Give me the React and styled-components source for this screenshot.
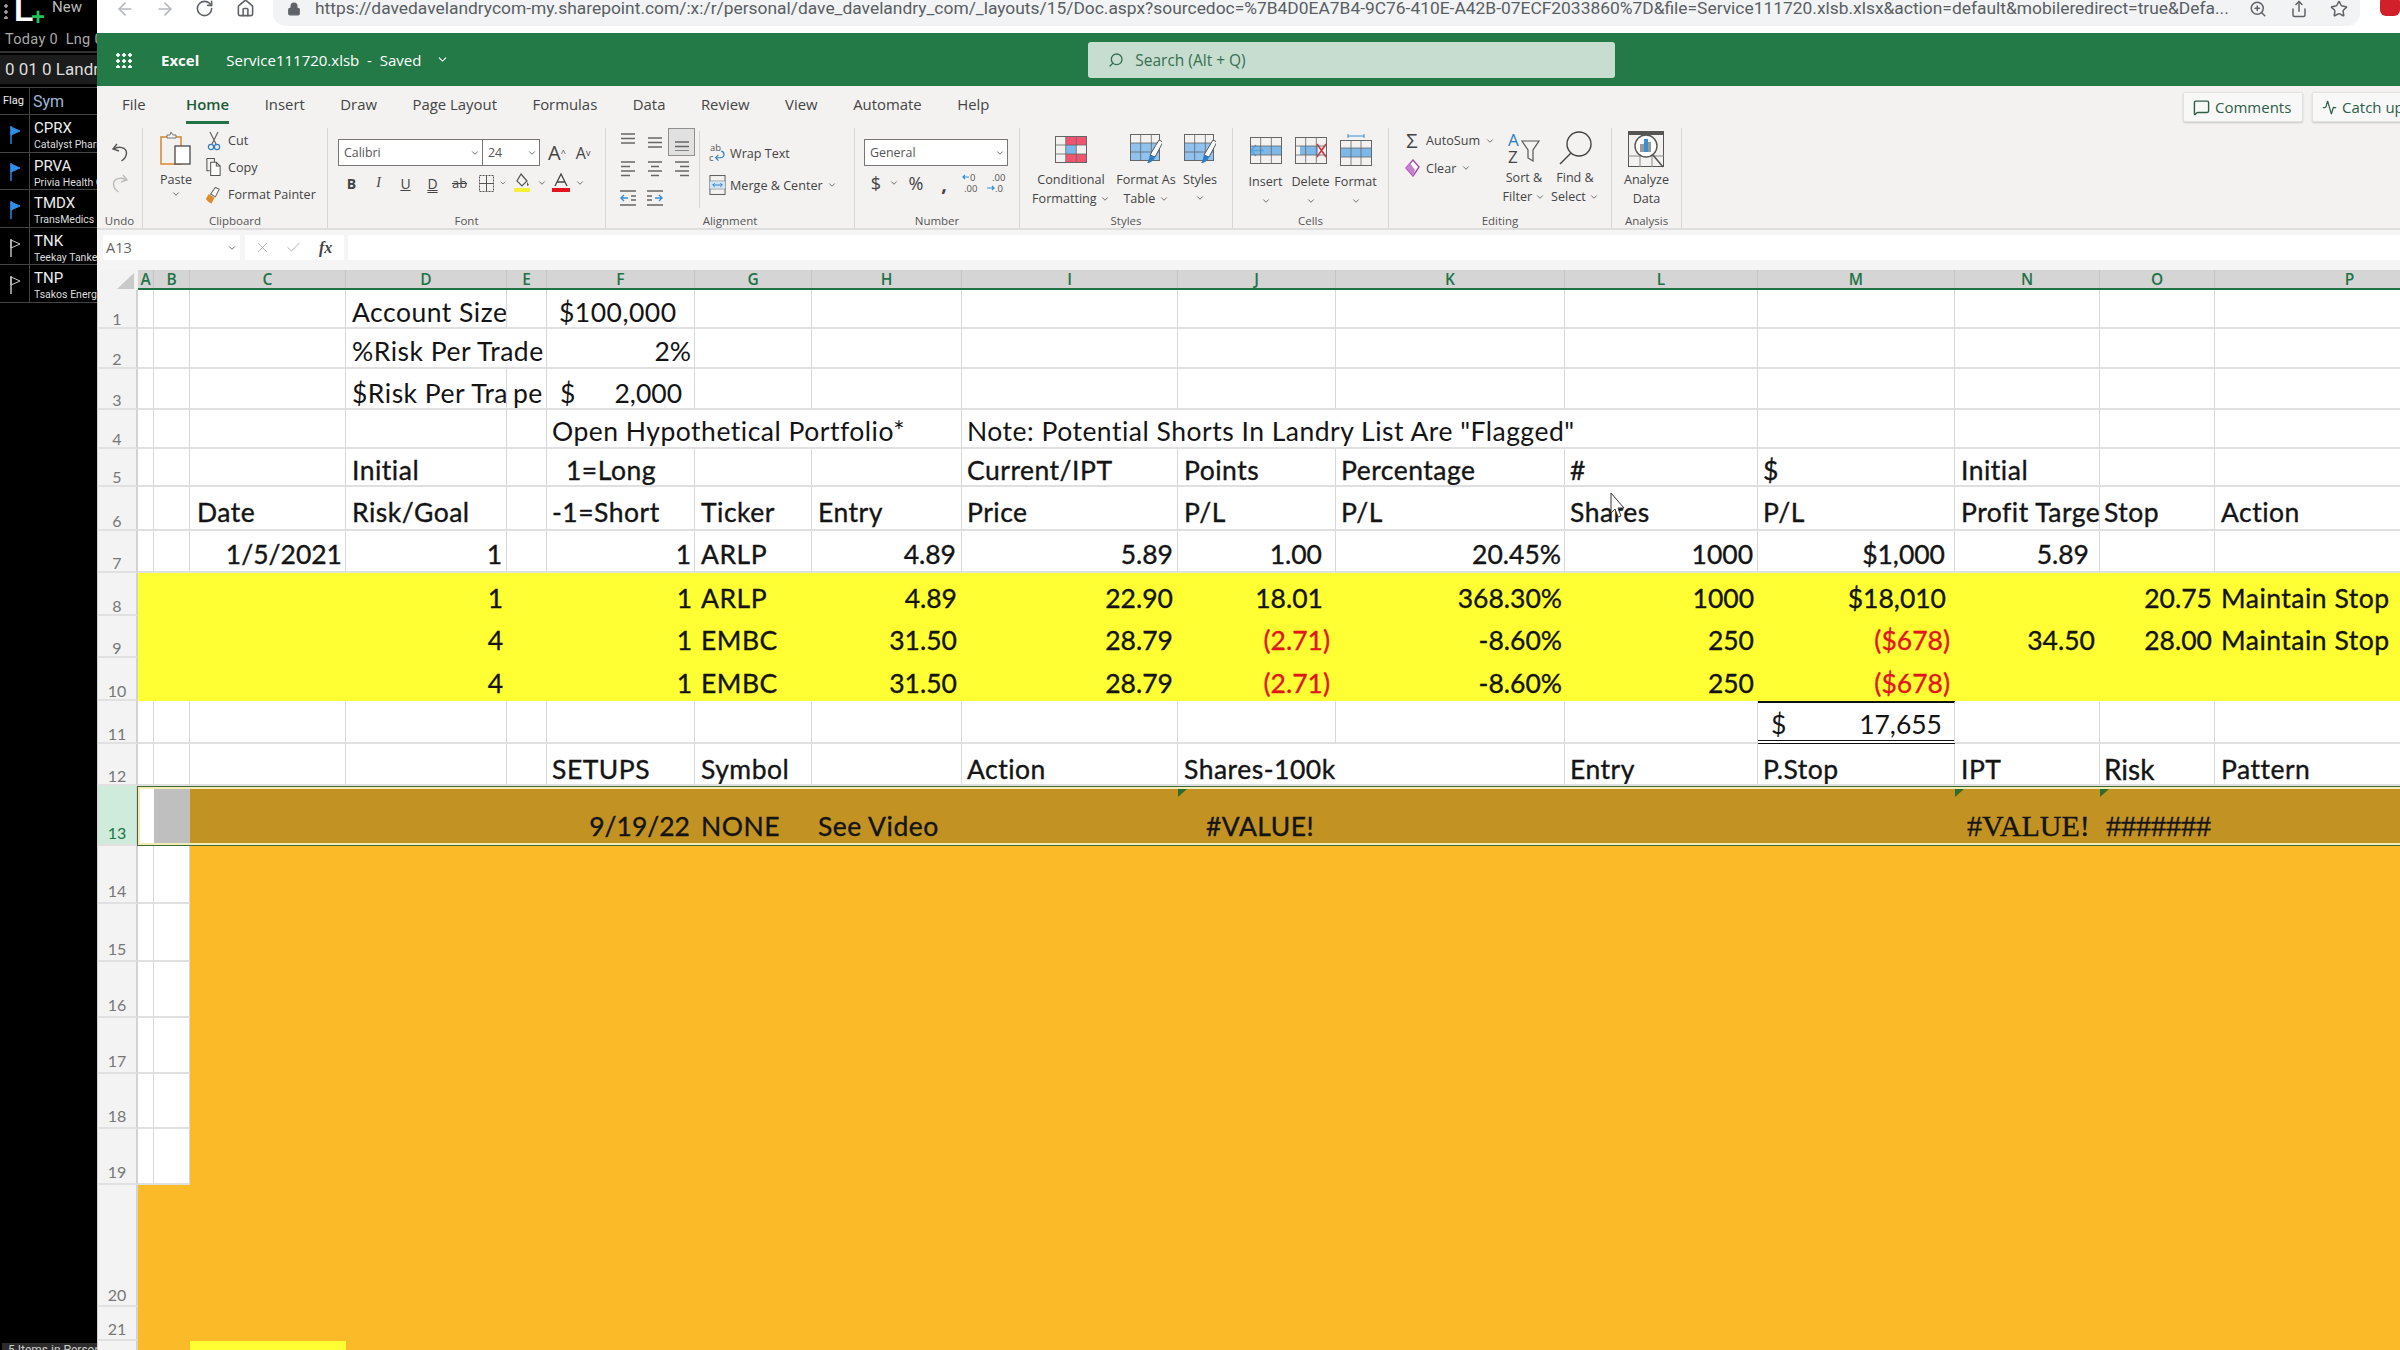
import React from "react";
import styled, { createGlobalStyle } from "styled-components";
import {
  ArrowLeft,
  ArrowRight,
  RotateCw,
  Home,
  Lock,
  ZoomIn,
  Share,
  Star,
  ChevronDown,
  Search,
  MessageSquare,
  Activity,
  X,
  Check,
} from "lucide-react";

const UI_FONT = `"Open Sans", "Noto Sans", sans-serif`;
const CELL_FONT = `Lato, "Open Sans", sans-serif`;

const GlobalStyle = createGlobalStyle`
  html, body {
    margin: 0;
    padding: 0;
    width: 2400px;
    height: 1350px;
    overflow: hidden;
    background: #000;
  }
  * { box-sizing: border-box; }
`;

const Page = styled.div`
  display: flex;
  width: 2400px;
  height: 1350px;
  overflow: hidden;
`;

/* left watch list */
const Side = styled.aside`
  width: 97px;
  flex-shrink: 0;
  height: 100%;
  background: #000;
  color: #eee;
  font-family: Roboto, sans-serif;
  display: flex;
  flex-direction: column;
  overflow: hidden;
  white-space: nowrap;
`;
const Brand = styled.div`
  height: 29px;
  display: flex;
  align-items: flex-start;
  padding-left: 4px;
  gap: 6px;
  overflow: hidden;
`;
const Grip = styled.div`
  width: 4px;
  height: 16px;
  margin-top: 3px;
  background: radial-gradient(circle, #999 1.5px, transparent 2px) 0 0 / 4px 6px;
`;
const BrandL = styled.span`
  font: 700 32px/20px "Liberation Sans", sans-serif;
  color: #fff;
  width: 14px;
`;
const BrandPlus = styled.span`
  font: 700 24px/26px "Liberation Sans", sans-serif;
  color: #21c35c;
  width: 12px;
  margin-top: 4px;
  margin-left: -3px;
`;
const BrandNew = styled.span`
  font-size: 15px;
  line-height: 14px;
  color: #bbb;
  margin-left: 3px;
`;
const Stats = styled.div`
  height: 24px;
  font-size: 14.5px;
  letter-spacing: 0.3px;
  line-height: 22px;
  color: #aaa;
  padding-left: 5px;
  border-bottom: 2px solid #333;
`;
const Portfolio = styled.div`
  height: 32px;
  margin-top: 2px;
  font-size: 17px;
  line-height: 28px;
  padding-left: 5px;
  background: #1c1c1c;
  color: #ddd;
  border-bottom: 3px solid #000;
`;
const WatchHead = styled.div`
  height: 28px;
  display: flex;
  align-items: center;
  border-top: 1px solid #444;
  border-bottom: 1px solid #444;
`;
const FlagHead = styled.span`
  width: 30px;
  height: 100%;
  line-height: 26px;
  font-size: 11px;
  padding-left: 3px;
  border-right: 1px solid #444;
`;
const SymHead = styled.span`
  padding-left: 3px;
  font-size: 16px;
  color: #9db8d8;
`;
const WatchRow = styled.div`
  height: 37.6px;
  display: flex;
  border-bottom: 1px solid #444;
`;
const FlagCell = styled.div`
  width: 30px;
  flex-shrink: 0;
  display: flex;
  align-items: center;
  justify-content: center;
  padding-top: 3px;
  border-right: 1px solid #444;
`;
const SymCell = styled.div`
  padding: 3px 0 0 4px;
  overflow: hidden;
`;
const Sym = styled.div`
  font-size: 15px;
  line-height: 20px;
  color: #eee;
`;
const SymName = styled.div`
  font-size: 10.5px;
  line-height: 13px;
  color: #ddd;
`;
const SideFoot = styled.div`
  margin-top: auto;
  height: 7px;
  margin-left: 2px;
  padding-left: 6px;
  background: #2b2b2b;
  color: #ccc;
  font-size: 12px;
  line-height: 14px;
  overflow: hidden;
`;

/* main column */
const Main = styled.main`
  flex: 1;
  min-width: 0;
  display: flex;
  flex-direction: column;
  background: #fff;
  overflow: hidden;
  position: relative;
`;

/* browser toolbar */
const Browser = styled.div`
  height: 33px;
  flex-shrink: 0;
  background: #fff;
  display: flex;
  align-items: flex-start;
  padding-left: 18px;
  color: #5f6368;
  overflow: hidden;
`;
const NavButton = styled.span`
  width: ${(p) => p.$w}px;
  height: 17px;
  flex-shrink: 0;
  margin-left: ${(p) => p.$ml || 0}px;
  display: flex;
  align-items: center;
  justify-content: center;
  color: ${(p) => p.$color || "#5f6368"};
`;
const UrlPill = styled.div`
  width: 2087px;
  margin-left: 18px;
  height: 26px;
  flex-shrink: 0;
  background: #f1f3f4;
  border-radius: 0 0 13px 13px;
  display: flex;
  align-items: flex-start;
  padding-left: 14px;
`;
const UrlText = styled.span`
  font: 400 17.4px/17px Roboto, sans-serif;
  color: #5a5e63;
  margin-left: 14px;
  width: 1918px;
  white-space: nowrap;
  overflow: hidden;
`;
const Extension = styled.span`
  width: 20px;
  height: 20px;
  margin-left: 20px;
  margin-top: -4px;
  flex-shrink: 0;
  background: #d2202a;
  border-radius: 6px;
`;

/* green title bar */
const TitleBar = styled.header`
  height: 53px;
  flex-shrink: 0;
  background: #237a47;
  color: #fff;
  display: flex;
  align-items: center;
  font-family: ${UI_FONT};
  position: relative;
`;
const Waffle = styled.span`
  width: 18px;
  height: 16px;
  margin-left: 18px;
  background: radial-gradient(circle, #fff 1.5px, transparent 2px) 0 0 / 6px 6px;
`;
const AppName = styled.span`
  margin-left: 28px;
  font-size: 15px;
  font-weight: 700;
`;
const DocName = styled.span`
  margin-left: 27px;
  font-size: 15px;
  width: 193px;
  white-space: nowrap;
`;
const DocChevron = styled.span`
  margin-left: 17px;
  display: flex;
`;
const SearchBox = styled.div`
  margin-left: 639px;
  width: 527px;
  height: 36px;
  background: #c7ddcf;
  border-radius: 3px;
  display: flex;
  align-items: center;
  gap: 11px;
  padding-left: 20px;
  color: #356f50;
  font-size: 15.5px;
`;

/* ribbon */
const Ribbon = styled.section`
  height: 144px;
  flex-shrink: 0;
  background: #f3f2f1;
  border-bottom: 2px solid #dedede;
  font-family: ${UI_FONT};
  color: #444;
  overflow: hidden;
`;
const TabBar = styled.nav`
  height: 42px;
  display: flex;
  align-items: center;
  padding-left: 25px;
  gap: 35.5px;
`;
const Tab = styled.span`
  position: relative;
  font-size: 14.9px;
  line-height: 36px;
  height: 36px;
  margin-top: -6px;
  margin-left: ${(p) => (p.$active ? 5 : 0)}px;
  white-space: nowrap;
  color: ${(p) => (p.$active ? "#1c5a38" : "#444")};
  font-weight: ${(p) => (p.$active ? 600 : 400)};

  ${(p) =>
    p.$active &&
    `&::after {
      content: "";
      position: absolute;
      left: 0;
      right: 0;
      bottom: -2px;
      height: 3px;
      background: #217346;
    }`}
`;
const TabActions = styled.div`
  margin-left: auto;
  margin-right: -12px;
  display: flex;
  gap: 9px;
`;
const ActionButton = styled.button`
  width: ${(p) => p.$w}px;
  height: 30px;
  display: flex;
  align-items: center;
  gap: 5px;
  padding: 0 0 0 9px;
  background: #f8f8f8;
  border: 1px solid #e2e2e2;
  border-radius: 2px;
  box-shadow: 0 1px 2px rgba(0, 0, 0, 0.18);
  color: #2f5e47;
  font: 400 15px ${UI_FONT};
  white-space: nowrap;
`;
const Groups = styled.div`
  display: flex;
  height: 100px;
`;
const Group = styled.div`
  width: ${(p) => p.$w}px;
  flex-shrink: 0;
  display: flex;
  flex-direction: column;
  border-right: 1px solid #d6d6d6;
`;
const GroupBody = styled.div`
  flex: 1;
  display: flex;
  min-height: 0;
  padding-left: ${(p) => p.$pl || 0}px;
`;
const GroupLabel = styled.div`
  height: 14px;
  text-align: center;
  font-size: 11.5px;
  line-height: 14px;
  color: #555;
`;
const UndoStack = styled.div`
  width: 100%;
  display: flex;
  flex-direction: column;
  align-items: center;
  gap: 11px;
  padding-top: 14px;
`;
const BigButton = styled.div`
  width: ${(p) => p.$w}px;
  flex-shrink: 0;
  display: flex;
  flex-direction: column;
  align-items: center;
  font-size: 12.6px;
  line-height: 19px;
  white-space: nowrap;
`;
const BigIcon = styled.div`
  height: ${(p) => p.$h || 42}px;
  display: flex;
  align-items: center;
  justify-content: center;
`;
const Chevron = styled(ChevronDown).attrs({ size: 10, strokeWidth: 2 })`
  color: #555;
  vertical-align: -1px;
  margin-top: ${(p) => p.$mt || 0}px;
`;
const SmallList = styled.div`
  width: ${(p) => p.$w}px;
  flex-shrink: 0;
  display: flex;
  flex-direction: column;
  margin-left: ${(p) => p.$ml || 0}px;
  padding-top: ${(p) => p.$pt || 0}px;
`;
const SmallItem = styled.div`
  height: ${(p) => p.$h || 27}px;
  display: flex;
  align-items: center;
  gap: ${(p) => p.$gap || 6}px;
  font-size: 12.6px;
  white-space: nowrap;
`;
const SmallIcon = styled.span`
  width: 17px;
  display: flex;
  justify-content: center;
  flex-shrink: 0;
`;
const ControlStack = styled.div`
  display: flex;
  flex-direction: column;
  padding-top: 11px;
`;
const FieldRow = styled.div`
  display: flex;
  align-items: center;
  height: 27px;
`;
const Field = styled.div`
  width: ${(p) => p.$w}px;
  height: 27px;
  background: #fff;
  border: 1px solid #777;
  margin-left: ${(p) => (p.$join ? -1 : 0)}px;
  display: flex;
  align-items: center;
  justify-content: space-between;
  padding: 0 2px 0 5px;
  font-size: 12.4px;
  color: #555;
`;
const ToolRow = styled.div`
  display: flex;
  align-items: center;
  height: 20px;
  margin-top: 7px;
`;
const Tool = styled.span`
  width: ${(p) => p.$w || 27}px;
  flex-shrink: 0;
  display: flex;
  align-items: center;
  justify-content: center;
  color: #444;
  font-size: ${(p) => p.$size || 14}px;
  font-weight: ${(p) => p.$weight || 400};
  font-style: ${(p) => (p.$italic ? "italic" : "normal")};
  font-family: ${(p) => (p.$serif ? `"Liberation Serif", serif` : UI_FONT)};
  text-decoration: ${(p) => p.$deco || "none"};
`;
const GrowLetter = styled.span`
  font-size: ${(p) => p.$size}px;
  color: #444;
  margin-left: ${(p) => p.$ml}px;
`;
const AlignGrid = styled.div`
  display: grid;
  grid-template-columns: repeat(3, 27px);
  grid-auto-rows: 28px;
`;
const AlignCell = styled.span`
  display: flex;
  align-items: center;
  justify-content: center;
  ${(p) => p.$on && "background: #e1e1e1; border: 1px solid #8f8f8f;"}
`;
const AlignDivider = styled.span`
  width: 1px;
  height: 77px;
  margin: 3px 0 0 4px;
  background: #d6d6d6;
`;

/* formula bar */
const FormulaBar = styled.div`
  height: 40px;
  flex-shrink: 0;
  background: #f5f5f5;
  display: flex;
  gap: 4px;
  padding: 5px 0 10px 6px;
  font-family: ${UI_FONT};
  color: #666;
`;
const NameBox = styled.div`
  width: 137px;
  background: #fff;
  display: flex;
  align-items: center;
  justify-content: space-between;
  padding: 0 3px;
  font-size: 14.5px;
`;
const FxBox = styled.div`
  width: 99px;
  margin-left: 1px;
  background: #fff;
  display: flex;
  align-items: center;
  gap: 14px;
  padding-left: 9px;
  color: #aaa;
`;
const FxLabel = styled.span`
  font: italic 700 16px "Liberation Serif", serif;
  color: #444;
  margin-left: 3px;
`;
const FormulaInput = styled.div`
  flex: 1;
  background: #fff;
`;

/* spreadsheet */
const COLUMNS = [
  ["A", 16],
  ["B", 36],
  ["C", 156],
  ["D", 161],
  ["E", 40],
  ["F", 148],
  ["G", 117],
  ["H", 150],
  ["I", 216],
  ["J", 158],
  ["K", 229],
  ["L", 193],
  ["M", 197],
  ["N", 145],
  ["O", 115],
  ["P", 270],
];
const TEMPLATE = COLUMNS.map((c) => `${c[1]}px`).join(" ");

const Sheet = styled.div`
  flex: 1;
  min-height: 0;
  position: relative;
  overflow: hidden;
  background: #fff;
`;
const HeadRow = styled.div`
  display: flex;
  height: 20px;
`;
const Corner = styled.div`
  width: 41px;
  flex-shrink: 0;
  background: #f3f3f3;
  display: flex;
  justify-content: flex-end;
  padding: 3px 4px 0 0;
`;
const ColGrid = styled.div`
  display: grid;
  grid-template-columns: ${TEMPLATE};
  border-bottom: 2px solid #217346;
`;
const ColHead = styled.div`
  background: #d5d5d5;
  border-right: 1px solid #c4c4c4;
  color: #217346;
  font: 600 15.5px/18px ${UI_FONT};
  text-align: center;
`;
const Row = styled.div`
  display: flex;
  height: ${(p) => p.$h}px;
`;
const RowHead = styled.div`
  width: 41px;
  flex-shrink: 0;
  background: ${(p) => (p.$on ? "#cfebdc" : "#f3f3f3")};
  color: ${(p) => (p.$on ? "#217346" : "#777")};
  border-left: 1px solid #cfcfcf;
  border-right: 2px solid #d2d2d2;
  border-bottom: 2px solid #e1e1e1;
  display: flex;
  align-items: flex-end;
  justify-content: center;
  font: 400 16px/16px ${CELL_FONT};
  padding-bottom: ${(p) => (p.$n <= 12 ? 0 : p.$n >= 20 ? 2 : 3)}px;
`;
const CellGrid = styled.div`
  position: relative;
  display: grid;
  grid-template-columns: ${TEMPLATE};
  background: ${(p) => p.$fill || "transparent"};

  ${(p) =>
    p.$selected &&
    `&::after {
      content: "";
      position: absolute;
      inset: 0 0 0 -1px;
      border: 1px solid #3f6a38;
      box-shadow: inset 0 0 0 2px #f3ecb4;
      pointer-events: none;
    }`}
`;
const Cell = styled.div`
  grid-column: span ${(p) => p.$span || 1};
  position: relative;
  display: flex;
  align-items: flex-end;
  justify-content: ${(p) =>
    p.$split ? "space-between" : p.$right ? "flex-end" : "flex-start"};
  padding: 0 ${(p) => p.$pr ?? 6}px ${(p) => p.$pb ?? 3}px ${(p) => p.$pl ?? 6}px;
  background: ${(p) => p.$bg || "transparent"};
  border-right: ${(p) => (p.$line ? "1px solid #d8d8d8" : "0")};
  border-bottom: ${(p) => (p.$line ? "2px solid #e0e0e0" : "0")};
  ${(p) => p.$total && "border-top: 2px solid #111; border-bottom: 4px double #111;"}
  color: ${(p) => p.$color || "#141414"};
  font: 400 ${(p) => p.$size || 26.5}px/30px ${(p) => (p.$serif ? `"Liberation Serif", serif` : CELL_FONT)};
  letter-spacing: ${(p) => (p.$text ? "0.5px" : "0")};
  -webkit-text-stroke: ${(p) => (p.$thin ? "0" : "0.35px")};
  white-space: nowrap;
  overflow: hidden;

  ${(p) =>
    p.$mark &&
    `&::before {
      content: "";
      position: absolute;
      left: 0;
      top: 3px;
      border-top: 8px solid #2e6b2e;
      border-right: 9px solid transparent;
    }`}
`;
const Pointer = styled.svg`
  position: absolute;
  left: 1513px;
  top: 222px;
`;

const RED = "#e0161a";
const right = (t, pr = 4) => ({ t, right: true, pr });
const red = (t, pr = 6) => ({ t, right: true, color: RED, pr });

const ROWS = [
  { n: 1, h: 39, thin: true, pb: 0, cells: { D: { t: "Account Size" }, F: { t: "$100,000", pl: 12 } } },
  { n: 2, h: 40, thin: true, pb: 1, cells: { D: { t: "%Risk Per Trade", span: 2 }, F: right("2%", 3) } },
  {
    n: 3,
    h: 41,
    thin: true,
    pb: 0,
    cells: {
      D: { t: "$Risk Per Tra" },
      E: { t: "pe" },
      F: { parts: ["$", "2,000"], pl: 13, pr: 12 },
    },
  },
  {
    n: 4,
    h: 39,
    thin: true,
    pb: 1,
    cells: {
      F: { t: "Open Hypothetical Portfolio*", span: 3, pl: 5 },
      I: { t: 'Note: Potential Shorts In Landry List Are "Flagged"', span: 4, pl: 5 },
    },
  },
  {
    n: 5,
    h: 38,
    pb: 0,
    cells: {
      D: { t: "Initial" },
      F: { t: "1=Long", pl: 19 },
      I: { t: "Current/IPT", pl: 5 },
      J: { t: "Points" },
      K: { t: "Percentage", pl: 5 },
      L: { t: "#", pl: 5 },
      M: { t: "$", pl: 5 },
      N: { t: "Initial" },
    },
  },
  {
    n: 6,
    h: 44,
    pb: 2,
    cells: {
      C: { t: "Date", pl: 7 },
      D: { t: "Risk/Goal" },
      F: { t: "-1=Short", pl: 5 },
      G: { t: "Ticker" },
      H: { t: "Entry" },
      I: { t: "Price", pl: 5 },
      J: { t: "P/L" },
      K: { t: "P/L", pl: 5 },
      L: { t: "Shares", pl: 5 },
      M: { t: "P/L", pl: 5 },
      N: { t: "Profit Target", pr: 0 },
      O: { t: "Stop", pl: 4 },
      P: { t: "Action" },
    },
  },
  {
    n: 7,
    h: 42,
    pb: 2,
    cells: {
      C: right("1/5/2021", 3),
      D: right("1"),
      F: right("1", 3),
      G: { t: "ARLP" },
      H: right("4.89", 5),
      I: right("5.89"),
      J: right("1.00", 13),
      K: right("20.45%", 3),
      L: right("1000"),
      M: right("$1,000", 9),
      N: right("5.89", 10),
    },
  },
  {
    n: 8,
    h: 43,
    fill: "#ffff33",
    cells: {
      D: right("1"),
      F: right("1", 3),
      G: { t: "ARLP" },
      H: right("4.89", 5),
      I: right("22.90", 5),
      J: right("18.01", 13),
      K: right("368.30%", 3),
      L: right("1000"),
      M: right("$18,010", 9),
      O: right("20.75", 3),
      P: { t: "Maintain Stop" },
    },
  },
  {
    n: 9,
    h: 42,
    fill: "#ffff33",
    cells: {
      D: right("4"),
      F: right("1", 3),
      G: { t: "EMBC" },
      H: right("31.50", 5),
      I: right("28.79", 5),
      J: red("(2.71)"),
      K: right("-8.60%", 3),
      L: right("250"),
      M: red("($678)", 5),
      N: right("34.50", 5),
      O: right("28.00", 3),
      P: { t: "Maintain Stop" },
    },
  },
  {
    n: 10,
    h: 43,
    fill: "#ffff33",
    cells: {
      D: right("4"),
      F: right("1", 3),
      G: { t: "EMBC" },
      H: right("31.50", 5),
      I: right("28.79", 5),
      J: red("(2.71)"),
      K: right("-8.60%", 3),
      L: right("250"),
      M: red("($678)", 5),
    },
  },
  {
    n: 11,
    h: 43,
    cells: { M: { parts: ["$", "17,655"], total: true, pl: 13, pr: 12, pb: 1, thin: true } },
  },
  {
    n: 12,
    h: 42,
    pb: 0,
    cells: {
      F: { t: "SETUPS", pl: 5 },
      G: { t: "Symbol" },
      I: { t: "Action", pl: 5 },
      J: { t: "Shares-100k", span: 2 },
      L: { t: "Entry", pl: 5 },
      M: { t: "P.Stop", pl: 5 },
      N: { t: "IPT" },
      O: { t: "Risk", pl: 4, size: 28 },
      P: { t: "Pattern" },
    },
  },
  {
    n: 13,
    h: 60,
    fill: "#c29322",
    on: true,
    pb: 5,
    cells: {
      A: { bg: "#fff" },
      B: { bg: "#bfbfbf" },
      F: right("9/19/22", 5),
      G: { t: "NONE" },
      H: { t: "See Video" },
      J: { t: "#VALUE!", pl: 28, mark: true },
      N: { t: "#VALUE!", serif: true, size: 30, pl: 12, pr: 0, mark: true },
      O: { t: "#######", serif: true, size: 30, pl: 6, pr: 0, mark: true },
    },
  },
  ...[
    [14, 58],
    [15, 58],
    [16, 56],
    [17, 56],
    [18, 55],
    [19, 56],
  ].map(([n, h]) => ({
    n,
    h,
    fill: "#fbba27",
    cells: { A: { bg: "#fff", line: true }, B: { bg: "#fff", line: true } },
  })),
  { n: 20, h: 122, fill: "#fbba27", cells: {} },
  { n: 21, h: 34, fill: "#fbba27", cells: {} },
  { n: 22, h: 60, fill: "#fbba27", cells: { C: { bg: "#ffff33" } } },
];

const WATCH = [
  ["CPRX", "Catalyst Pharma", true],
  ["PRVA", "Privia Health Gr", true],
  ["TMDX", "TransMedics Gro", true],
  ["TNK", "Teekay Tankers", false],
  ["TNP", "Tsakos Energy", false],
];

const TABS = ["File", "Home", "Insert", "Draw", "Page Layout", "Formulas", "Data", "Review", "View", "Automate", "Help"];

/* drawings */
const WatchFlag = ({ on }) => (
  <svg width="12" height="20" viewBox="0 0 12 20">
    <path d="M2 1v18" stroke={on ? "#2f8fe8" : "#ccc"} strokeWidth="1.4" />
    <path
      d="M2 2l9 4-9 4z"
      fill={on ? "#2f8fe8" : "none"}
      stroke={on ? "#2f8fe8" : "#ccc"}
      strokeWidth="1"
    />
  </svg>
);
const UndoIcon = ({ color }) => (
  <svg width="18" height="20" viewBox="0 0 18 20" fill="none" stroke={color} strokeWidth="1.4">
    <path d="M6 2L2 7l6 2" />
    <path d="M2.5 7c5-3 13-2 13 4 0 3-2 6-5 8" />
  </svg>
);
const RedoIcon = ({ color }) => (
  <svg width="18" height="20" viewBox="0 0 18 20" fill="none" stroke={color} strokeWidth="1.4">
    <path d="M12 2l4 5-6 2" />
    <path d="M15.5 7c-5-3-13-2-13 4 0 3 2 6 5 8" />
  </svg>
);
const PasteIcon = () => (
  <svg width="34" height="36" viewBox="0 0 34 36" fill="none">
    <rect x="2" y="6" width="20" height="27" stroke="#dc8b3a" strokeWidth="1.6" />
    <path d="M8 7V4h3l1-3 2 3h3v3z" fill="#f6f6f6" stroke="#777" />
    <rect x="16" y="15" width="15" height="18" fill="#fff" stroke="#555" strokeWidth="1.4" />
  </svg>
);
const CutIcon = () => (
  <svg width="14" height="20" viewBox="0 0 14 20" fill="none" strokeWidth="1.2">
    <path d="M3 1l6 12M11 1L5 13" stroke="#666" />
    <circle cx="4" cy="16" r="2.6" stroke="#2f7cc1" />
    <circle cx="10" cy="16" r="2.6" stroke="#2f7cc1" />
  </svg>
);
const CopyIcon = () => (
  <svg width="18" height="20" viewBox="0 0 18 20" fill="none" stroke="#555" strokeWidth="1.1">
    <path d="M2 1h8v4M2 1v13h3" />
    <path d="M6 5h6l4 4v10H6z" fill="#fff" />
    <path d="M12 5v4h4" />
  </svg>
);
const PainterIcon = () => (
  <svg width="18" height="20" viewBox="0 0 18 20">
    <path d="M4 9l6 4-3 6c-3-1-5-3-6-5z" fill="#e08a2e" />
    <path d="M6 9l5-7 4 2-4 8z" fill="#fff" stroke="#666" strokeWidth="1.1" />
  </svg>
);
const BorderIcon = () => (
  <svg width="17" height="19" viewBox="0 0 17 19" fill="none" stroke="#555">
    <rect x="1.5" y="1.5" width="14" height="16" strokeDasharray="2 1" />
    <path d="M8.5 2v15M2 9.5h13" />
  </svg>
);
const FillIcon = () => (
  <svg width="18" height="20" viewBox="0 0 18 20">
    <path d="M8 1l6 7-5 5-5-5z" fill="none" stroke="#555" strokeWidth="1.2" />
    <path d="M14 9l2 3-2 1z" fill="#555" />
    <rect x="1" y="15" width="16" height="4" fill="#f6ef3a" />
  </svg>
);
const FontColorIcon = () => (
  <svg width="18" height="20" viewBox="0 0 18 20">
    <path d="M3 13L9 1l6 12M5.5 9h7" fill="none" stroke="#444" strokeWidth="1.3" />
    <rect x="0" y="15" width="18" height="4" fill="#e0141e" />
  </svg>
);
const Lines = ({ rows, top = 0 }) => (
  <svg width="18" height="18" viewBox="0 0 18 18" stroke="#666" strokeWidth="1.5">
    {rows.map(([a, b], i) => (
      <path key={i} d={`M${a} ${top + i * 4.5 + 1}H${b}`} />
    ))}
  </svg>
);
const IndentIcon = ({ dir }) => (
  <svg width="18" height="18" viewBox="0 0 18 18" strokeWidth="1.4" fill="none">
    <path d="M1 2h16M1 16h16" stroke="#666" />
    <path d={dir > 0 ? "M1 7h5M1 11h5" : "M12 7h5M12 11h5"} stroke="#666" />
    <path d={dir > 0 ? "M9 9h7M13 6l3 3-3 3" : "M9 9H2M5 6L2 9l3 3"} stroke="#3b8ed0" />
  </svg>
);
const WrapIcon = () => (
  <svg width="18" height="22" viewBox="0 0 18 22" fill="none">
    <text x="1" y="9" fontSize="10" fill="#555" fontFamily="Open Sans">ab</text>
    <text x="0" y="19" fontSize="10" fill="#555" fontFamily="Open Sans">c</text>
    <path d="M13 9c4 1 4 7-1 7H8M10 13l-3 3 3 3" stroke="#2f7cc1" strokeWidth="1.2" />
  </svg>
);
const MergeIcon = () => (
  <svg width="18" height="22" viewBox="0 0 18 22" fill="none">
    <rect x="1" y="1" width="16" height="20" stroke="#555" />
    <path d="M1 7h16M1 15h16" stroke="#555" />
    <rect x="1" y="7" width="16" height="8" fill="#cfe4f5" />
    <path d="M4 11h10M6 9l-2 2 2 2M12 9l2 2-2 2" stroke="#2f7cc1" />
  </svg>
);
const DecimalIcon = ({ up }) => (
  <svg width="20" height="22" viewBox="0 0 20 22">
    <text x={up ? 9 : 6} y="9" fontSize="9.5" fill="#555" fontFamily="Open Sans">{up ? "0" : ".00"}</text>
    <text x={up ? 3 : 9} y="20" fontSize="9.5" fill="#555" fontFamily="Open Sans">{up ? ".00" : ".0"}</text>
    <path
      d={up ? "M8 5H2M4 3L2 5l2 2" : "M1 16h7M6 14l2 2-2 2"}
      stroke="#2f8fd0"
      strokeWidth="1.2"
      fill="none"
    />
  </svg>
);
const Table = ({ w = 32, h = 27, children, stroke = "#666" }) => (
  <svg width={w} height={h} viewBox={`0 0 ${w} ${h}`} fill="none">
    {children}
    <rect x=".5" y=".5" width={w - 1} height={h - 1} stroke={stroke} />
    <path
      d={`M${w / 3} 0V${h}M${(2 * w) / 3} 0V${h}M0 ${h / 3}H${w}M0 ${(2 * h) / 3}H${w}`}
      stroke={stroke}
      strokeWidth=".8"
    />
  </svg>
);
const ConditionalIcon = () => (
  <Table>
    <rect x="11" y="0" width="21" height="9" fill="#f0556f" />
    <rect x="11" y="9" width="10" height="9" fill="#7eb8e8" />
    <rect x="11" y="18" width="21" height="9" fill="#f0556f" />
  </Table>
);
const TableBrush = ({ w = 32 }) => (
  <svg width={w} height="30" viewBox={`0 0 ${w} 30`} fill="none">
    <rect x="0.5" y="0.5" width={w - 3} height="26" stroke="#666" />
    <rect x="1" y="9" width={w - 4} height="17" fill="#8fc2ee" />
    <path d={`M0 9H${w - 3}M0 18H${w - 3}M${w / 3} 0V27M${(2 * w) / 3} 0V27`} stroke="#666" strokeWidth=".8" />
    <path d={`M${w - 12} 21l9-15 4 2-8 15z`} fill="#fff" stroke="#555" />
    <path d={`M${w - 12} 21l5 2c-1 4-5 6-8 6 2-2 2-6 3-8z`} fill="#2f7cc1" />
  </svg>
);
const InsertIcon = () => (
  <Table>
    <rect x="1" y="9" width="30" height="9" fill="#7eb8e8" />
    <path d="M14 13.5H1M6 8l-5 5.5L6 19" stroke="#5aa5e0" strokeWidth="1.5" />
  </Table>
);
const DeleteIcon = () => (
  <Table>
    <rect x="5" y="9" width="18" height="9" fill="#7eb8e8" />
    <path d="M22 7l9 13M31 7l-9 13" stroke="#e0323c" strokeWidth="1.6" />
  </Table>
);
const FormatIcon = () => (
  <svg width="32" height="32" viewBox="0 0 32 32" fill="none">
    <path d="M8 2h16M8 0v4M24 0v4" stroke="#3b8ed0" />
    <rect x=".5" y="6.5" width="31" height="25" stroke="#666" />
    <rect x="1" y="14" width="30" height="9" fill="#7eb8e8" />
    <path d="M11 6v26M21 6v26M0 14h32M0 23h32" stroke="#666" strokeWidth=".8" />
  </svg>
);
const ClearIcon = () => (
  <svg width="16" height="18" viewBox="0 0 16 18">
    <path d="M9 1l6 7-6 9-7-8z" fill="#fff" stroke="#a34bb0" strokeWidth="1.4" />
    <path d="M2 9l4-5 5 7-2 6z" fill="#c77fd0" />
  </svg>
);
const SortIcon = () => (
  <svg width="34" height="34" viewBox="0 0 34 34" fill="none">
    <text x="1" y="15" fontSize="17" fill="#2f7cc1" fontFamily="Open Sans">A</text>
    <text x="1" y="32" fontSize="17" fill="#444" fontFamily="Open Sans">Z</text>
    <path d="M15 10h17l-6 9v11l-5-3v-8z" stroke="#555" strokeWidth="1.2" />
  </svg>
);
const FindIcon = () => (
  <svg width="36" height="34" viewBox="0 0 36 34" fill="none" stroke="#444" strokeWidth="1.4">
    <ellipse cx="22" cy="13" rx="12" ry="12" />
    <path d="M14 22L3 33" />
  </svg>
);
const AnalyzeIcon = () => (
  <svg width="37" height="37" viewBox="0 0 37 37" fill="none">
    <rect x=".5" y=".5" width="35" height="35" stroke="#555" />
    <rect x="1" y="1" width="34" height="3" fill="#555" />
    <path d="M0 25h36M12 25v11M24 25v11" stroke="#888" />
    <circle cx="18" cy="15" r="11" fill="#fff" stroke="#555" strokeWidth="1.4" />
    <rect x="12" y="13" width="4" height="8" fill="#999" />
    <rect x="16" y="8" width="4" height="13" fill="#3b8ed0" />
    <rect x="20" y="11" width="3" height="10" fill="#999" />
    <path d="M25 24l10 12" stroke="#555" strokeWidth="1.6" />
  </svg>
);

const renderCell = (row, id) => {
  const c = row.cells[id] || {};
  const line = c.line ?? !row.fill;
  return (
    <Cell
      key={id}
      $span={c.span}
      $right={c.right}
      $split={!!c.parts}
      $pl={c.pl}
      $pr={c.pr}
      $pb={c.pb ?? row.pb}
      $bg={c.bg}
      $line={line}
      $color={c.color}
      $size={c.size}
      $serif={c.serif}
      $mark={c.mark}
      $total={c.total}
      $text={!c.right && !c.parts && !c.serif && !c.size}
      $thin={row.thin || c.thin}
    >
      {c.parts ? c.parts.map((p) => <span key={p}>{p}</span>) : c.t}
    </Cell>
  );
};

const SheetRow = ({ row }) => {
  let skip = 0;
  return (
    <Row $h={row.h}>
      <RowHead $on={row.on} $n={row.n}>{row.n}</RowHead>
      <CellGrid $selected={row.on} $fill={row.fill}>
        {COLUMNS.map(([id]) => {
          if (skip > 0) {
            skip -= 1;
            return null;
          }
          const span = row.cells[id] && row.cells[id].span;
          if (span) skip = span - 1;
          return renderCell(row, id);
        })}
      </CellGrid>
    </Row>
  );
};

const topLines = [[2, 16], [2, 16], [2, 16]];
const App = () => (
  <Page>
    <GlobalStyle />
    <Side>
      <Brand>
        <Grip />
        <BrandL>L</BrandL>
        <BrandPlus>+</BrandPlus>
        <BrandNew>New</BrandNew>
      </Brand>
      <Stats>Today 0&nbsp; Lng 0</Stats>
      <Portfolio>0 01 0 Landry</Portfolio>
      <WatchHead>
        <FlagHead>Flag</FlagHead>
        <SymHead>Sym</SymHead>
      </WatchHead>
      {WATCH.map(([sym, name, on]) => (
        <WatchRow key={sym}>
          <FlagCell>
            <WatchFlag on={on} />
          </FlagCell>
          <SymCell>
            <Sym>{sym}</Sym>
            <SymName>{name}</SymName>
          </SymCell>
        </WatchRow>
      ))}
      <SideFoot>5 Items in Personal</SideFoot>
    </Side>

    <Main>
      <Browser>
        <NavButton $w={20} $color="#b5b8bc"><ArrowLeft size={20} /></NavButton>
        <NavButton $w={20} $ml={20} $color="#b5b8bc"><ArrowRight size={20} /></NavButton>
        <NavButton $w={20} $ml={19}><RotateCw size={19} /></NavButton>
        <NavButton $w={20} $ml={21}><Home size={19} /></NavButton>
        <UrlPill>
          <NavButton $w={14}><Lock size={14} fill="#5f6368" /></NavButton>
          <UrlText>
            https://davedavelandrycom-my.sharepoint.com/:x:/r/personal/dave_davelandry_com/_layouts/15/Doc.aspx?sourcedoc=%7B4D0EA7B4-9C76-410E-A42B-07ECF2033860%7D&amp;file=Service111720.xlsb.xlsx&amp;action=default&amp;mobileredirect=true&amp;Defa...
          </UrlText>
          <NavButton $w={20} $ml={15}><ZoomIn size={18} /></NavButton>
          <NavButton $w={20} $ml={21}><Share size={18} /></NavButton>
          <NavButton $w={20} $ml={20}><Star size={18} /></NavButton>
        </UrlPill>
        <Extension />
      </Browser>

      <TitleBar>
        <Waffle />
        <AppName>Excel</AppName>
        <DocName>Service111720.xlsb&nbsp; -&nbsp; Saved</DocName>
        <DocChevron><ChevronDown size={13} /></DocChevron>
        <SearchBox>
          <Search size={16} style={{ transform: "scaleX(-1)" }} />
          Search (Alt + Q)
        </SearchBox>
      </TitleBar>

      <Ribbon>
        <TabBar>
          {TABS.map((t) => (
            <Tab key={t} $active={t === "Home"}>{t}</Tab>
          ))}
          <TabActions>
            <ActionButton $w={120}><MessageSquare size={17} />Comments</ActionButton>
            <ActionButton $w={100}><Activity size={15} />Catch up</ActionButton>
          </TabActions>
        </TabBar>
        <Groups>
          <Group $w={46}>
            <GroupBody>
              <UndoStack>
                <UndoIcon color="#555" />
                <RedoIcon color="#bbb" />
              </UndoStack>
            </GroupBody>
            <GroupLabel>Undo</GroupLabel>
          </Group>

          <Group $w={185}>
            <GroupBody $pl={14}>
              <BigButton $w={38}>
                <BigIcon $h={42}><PasteIcon /></BigIcon>
                <span>Paste</span>
                <Chevron />
              </BigButton>
              <SmallList $w={120} $ml={10}>
                <SmallItem $h={25}><SmallIcon><CutIcon /></SmallIcon>Cut</SmallItem>
                <SmallItem $h={28}><SmallIcon><CopyIcon /></SmallIcon>Copy</SmallItem>
                <SmallItem $h={27}><SmallIcon><PainterIcon /></SmallIcon>Format Painter</SmallItem>
              </SmallList>
            </GroupBody>
            <GroupLabel>Clipboard</GroupLabel>
          </Group>

          <Group $w={278}>
            <GroupBody $pl={10}>
              <ControlStack>
                <FieldRow>
                  <Field $w={145}>Calibri<Chevron /></Field>
                  <Field $w={58} $join>24<Chevron /></Field>
                  <GrowLetter $size={20} $ml={8}>A</GrowLetter>
                  <GrowLetter $size={9} $ml={0}>^</GrowLetter>
                  <GrowLetter $size={16} $ml={10}>A</GrowLetter>
                  <GrowLetter $size={9} $ml={0}>v</GrowLetter>
                </FieldRow>
                <ToolRow>
                  <Tool $weight={700}>B</Tool>
                  <Tool $italic $serif>I</Tool>
                  <Tool $deco="underline">U</Tool>
                  <Tool $deco="underline double">D</Tool>
                  <Tool $size={13} $deco="line-through">ab</Tool>
                  <Tool $w={26}><BorderIcon /></Tool>
                  <Tool $w={8}><Chevron /></Tool>
                  <Tool $w={30}><FillIcon /></Tool>
                  <Tool $w={10}><Chevron /></Tool>
                  <Tool $w={28}><FontColorIcon /></Tool>
                  <Tool $w={10}><Chevron /></Tool>
                </ToolRow>
              </ControlStack>
            </GroupBody>
            <GroupLabel>Font</GroupLabel>
          </Group>

          <Group $w={249}>
            <GroupBody $pl={8}>
              <AlignGrid>
                <AlignCell><Lines rows={topLines} top={0} /></AlignCell>
                <AlignCell><Lines rows={topLines} top={4} /></AlignCell>
                <AlignCell $on><Lines rows={topLines} top={8} /></AlignCell>
                <AlignCell><Lines rows={[[2, 16], [2, 11], [2, 16], [2, 11]]} /></AlignCell>
                <AlignCell><Lines rows={[[2, 16], [5, 13], [2, 16], [5, 13]]} /></AlignCell>
                <AlignCell><Lines rows={[[2, 16], [7, 16], [2, 16], [7, 16]]} /></AlignCell>
                <AlignCell><IndentIcon dir={-1} /></AlignCell>
                <AlignCell><IndentIcon dir={1} /></AlignCell>
              </AlignGrid>
              <AlignDivider />
              <SmallList $w={135} $pt={9} $ml={9}>
                <SmallItem $h={32} $gap={4}><SmallIcon><WrapIcon /></SmallIcon>Wrap Text</SmallItem>
                <SmallItem $h={32} $gap={4}><SmallIcon><MergeIcon /></SmallIcon>Merge &amp; Center <Chevron /></SmallItem>
              </SmallList>
            </GroupBody>
            <GroupLabel>Alignment</GroupLabel>
          </Group>

          <Group $w={165}>
            <GroupBody $pl={9}>
              <ControlStack>
                <FieldRow>
                  <Field $w={144}>General<Chevron /></Field>
                </FieldRow>
                <ToolRow>
                  <Tool $w={24} $size={18}>$</Tool>
                  <Tool $w={12}><Chevron /></Tool>
                  <Tool $w={32} $size={18}>%</Tool>
                  <Tool $w={24} $size={20} $weight={700}>,</Tool>
                  <Tool $w={30}><DecimalIcon up /></Tool>
                  <Tool $w={20}><DecimalIcon /></Tool>
                </ToolRow>
              </ControlStack>
            </GroupBody>
            <GroupLabel>Number</GroupLabel>
          </Group>

          <Group $w={213}>
            <GroupBody $pl={12}>
              <BigButton $w={78}>
                <BigIcon><ConditionalIcon /></BigIcon>
                Conditional
                <span>Formatting <Chevron /></span>
              </BigButton>
              <BigButton $w={72}>
                <BigIcon><TableBrush /></BigIcon>
                Format As
                <span>Table <Chevron /></span>
              </BigButton>
              <BigButton $w={36}>
                <BigIcon><TableBrush /></BigIcon>
                Styles
                <Chevron $mt={4} />
              </BigButton>
            </GroupBody>
            <GroupLabel>Styles</GroupLabel>
          </Group>

          <Group $w={156}>
            <GroupBody $pl={10}>
              <BigButton $w={45}>
                <BigIcon $h={44}><InsertIcon /></BigIcon>
                Insert
                <Chevron $mt={5} />
              </BigButton>
              <BigButton $w={45}>
                <BigIcon $h={44}><DeleteIcon /></BigIcon>
                Delete
                <Chevron $mt={5} />
              </BigButton>
              <BigButton $w={45}>
                <BigIcon $h={44}><FormatIcon /></BigIcon>
                Format
                <Chevron $mt={5} />
              </BigButton>
            </GroupBody>
            <GroupLabel>Cells</GroupLabel>
          </Group>

          <Group $w={223}>
            <GroupBody $pl={14}>
              <SmallList $w={95}>
                <SmallItem $h={25} $gap={5}><Tool $w={18} $size={20}>Σ</Tool>AutoSum <Chevron /></SmallItem>
                <SmallItem $h={30} $gap={5}><Tool $w={18}><ClearIcon /></Tool>Clear <Chevron /></SmallItem>
              </SmallList>
              <BigButton $w={52}>
                <BigIcon $h={40}><SortIcon /></BigIcon>
                Sort &amp;
                <span>Filter <Chevron /></span>
              </BigButton>
              <BigButton $w={50}>
                <BigIcon $h={40}><FindIcon /></BigIcon>
                Find &amp;
                <span>Select <Chevron /></span>
              </BigButton>
            </GroupBody>
            <GroupLabel>Editing</GroupLabel>
          </Group>

          <Group $w={70}>
            <GroupBody>
              <BigButton $w={69}>
                <BigIcon><AnalyzeIcon /></BigIcon>
                Analyze
                <span>Data</span>
              </BigButton>
            </GroupBody>
            <GroupLabel>Analysis</GroupLabel>
          </Group>
        </Groups>
      </Ribbon>

      <FormulaBar>
        <NameBox>A13<Chevron /></NameBox>
        <FxBox>
          <X size={17} strokeWidth={1.2} />
          <Check size={17} strokeWidth={1.2} />
          <FxLabel>fx</FxLabel>
        </FxBox>
        <FormulaInput />
      </FormulaBar>

      <Sheet>
        <HeadRow>
          <Corner>
            <svg width="17" height="16" viewBox="0 0 17 16">
              <path d="M17 0v16H0z" fill="#c9c9c9" />
            </svg>
          </Corner>
          <ColGrid>
            {COLUMNS.map(([id]) => (
              <ColHead key={id}>{id}</ColHead>
            ))}
          </ColGrid>
        </HeadRow>
        {ROWS.map((row) => (
          <SheetRow key={row.n} row={row} />
        ))}
        <Pointer width="15" height="27" viewBox="0 0 15 27">
          <path d="M1 1v20l4-4 3 8 3-1-3-8h6z" fill="#fff" stroke="#333" strokeWidth="1" />
        </Pointer>
      </Sheet>
    </Main>
  </Page>
);

export default App;
